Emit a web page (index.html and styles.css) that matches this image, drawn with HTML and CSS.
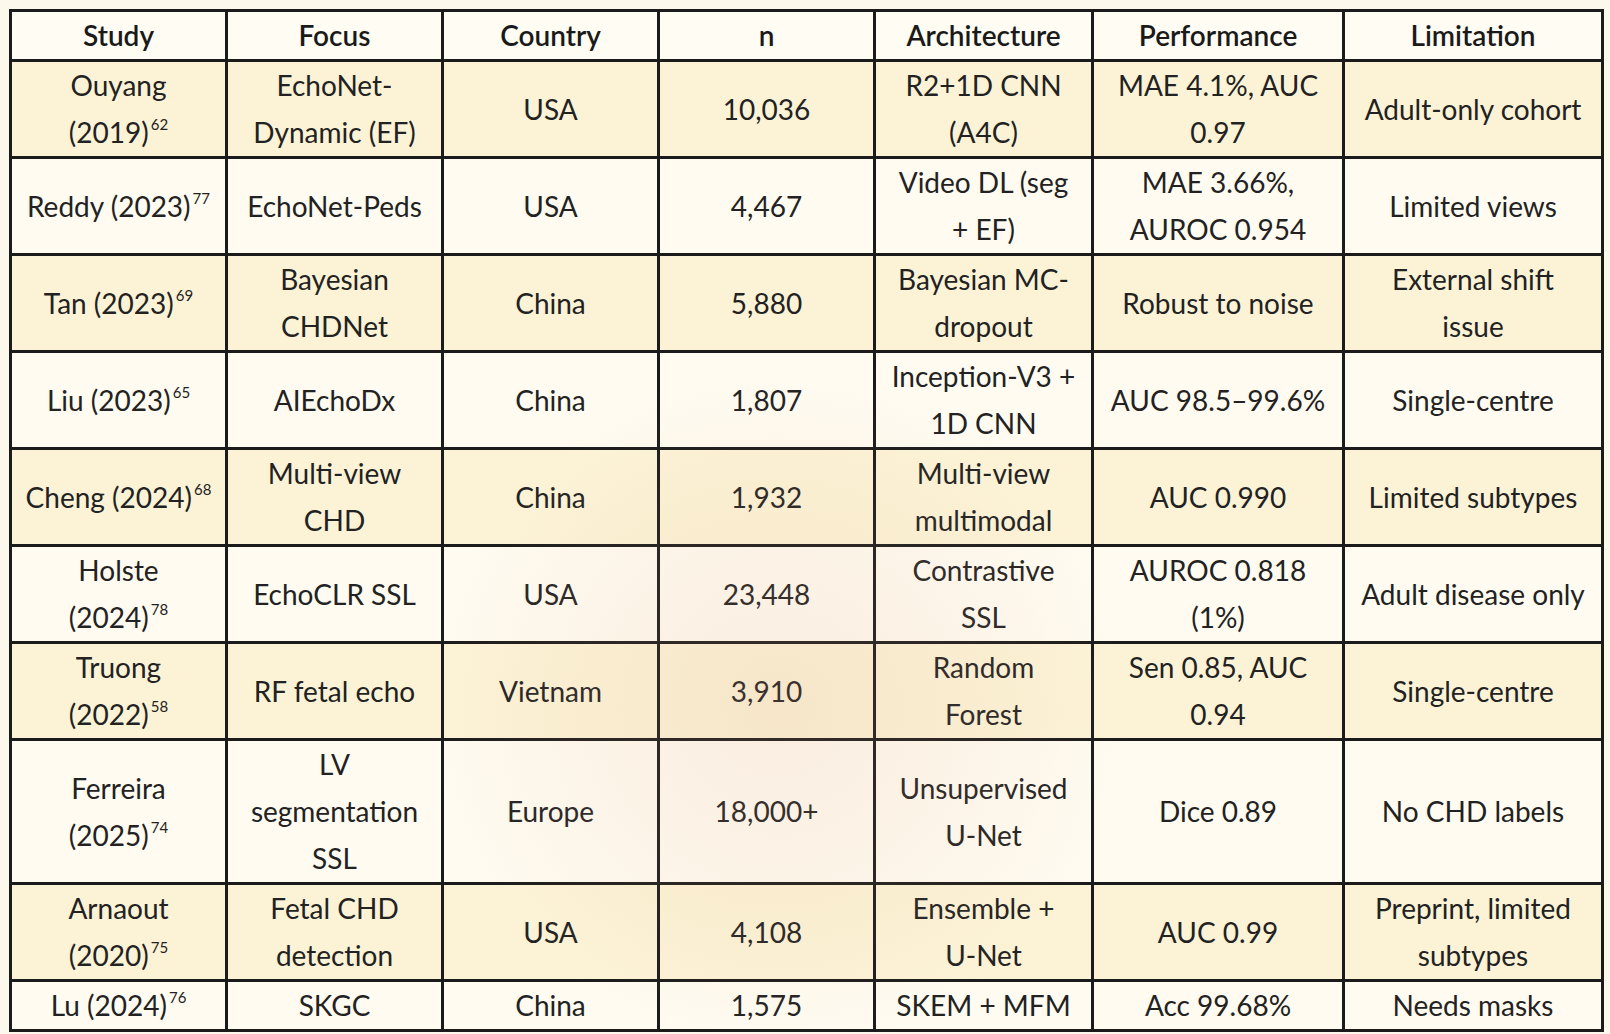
FILE: index.html
```html
<!DOCTYPE html>
<html lang="en">
<head>
<meta charset="utf-8">
<title>Deep learning echocardiography studies</title>
<link rel="stylesheet" href="styles.css">
</head>
<body>
<div class="page">
  <div class="wrap">
    <table class="studies">
      <colgroup>
        <col class="c-study"><col class="c-focus"><col class="c-country"><col class="c-n"><col class="c-arch"><col class="c-perf"><col class="c-lim">
      </colgroup>
      <thead>
        <tr class="head">
          <th>Study</th><th>Focus</th><th>Country</th><th>n</th><th>Architecture</th><th>Performance</th><th>Limitation</th>
        </tr>
      </thead>
      <tbody>
        <tr class="odd">
          <td>Ouyang<br>(2019)<sup>62</sup></td><td>EchoNet-<br>Dynamic (EF)</td><td>USA</td><td>10,036</td><td>R2+1D CNN<br>(A4C)</td><td>MAE 4.1%, AUC<br>0.97</td><td>Adult-only cohort</td>
        </tr>
        <tr class="even">
          <td>Reddy (2023)<sup>77</sup></td><td>EchoNet-Peds</td><td>USA</td><td>4,467</td><td>Video DL (seg<br>+ EF)</td><td>MAE 3.66%,<br>AUROC 0.954</td><td>Limited views</td>
        </tr>
        <tr class="odd">
          <td>Tan (2023)<sup>69</sup></td><td>Bayesian<br>CHDNet</td><td>China</td><td>5,880</td><td>Bayesian MC-<br>dropout</td><td>Robust to noise</td><td>External shift<br>issue</td>
        </tr>
        <tr class="even">
          <td>Liu (2023)<sup>65</sup></td><td>AIEchoDx</td><td>China</td><td>1,807</td><td>Inception-V3 +<br>1D CNN</td><td>AUC 98.5–99.6%</td><td>Single-centre</td>
        </tr>
        <tr class="odd">
          <td>Cheng (2024)<sup>68</sup></td><td>Multi-view<br>CHD</td><td>China</td><td>1,932</td><td>Multi-view<br>multimodal</td><td>AUC 0.990</td><td>Limited subtypes</td>
        </tr>
        <tr class="even">
          <td>Holste<br>(2024)<sup>78</sup></td><td>EchoCLR SSL</td><td>USA</td><td>23,448</td><td>Contrastive<br>SSL</td><td>AUROC 0.818<br>(1%)</td><td>Adult disease only</td>
        </tr>
        <tr class="odd">
          <td>Truong<br>(2022)<sup>58</sup></td><td>RF fetal echo</td><td>Vietnam</td><td>3,910</td><td>Random<br>Forest</td><td>Sen 0.85, AUC<br>0.94</td><td>Single-centre</td>
        </tr>
        <tr class="even">
          <td>Ferreira<br>(2025)<sup>74</sup></td><td>LV<br>segmentation<br>SSL</td><td>Europe</td><td>18,000+</td><td>Unsupervised<br>U-Net</td><td>Dice 0.89</td><td>No CHD labels</td>
        </tr>
        <tr class="odd">
          <td>Arnaout<br>(2020)<sup>75</sup></td><td>Fetal CHD<br>detection</td><td>USA</td><td>4,108</td><td>Ensemble +<br>U-Net</td><td>AUC 0.99</td><td>Preprint, limited<br>subtypes</td>
        </tr>
        <tr class="even">
          <td>Lu (2024)<sup>76</sup></td><td>SKGC</td><td>China</td><td>1,575</td><td>SKEM + MFM</td><td>Acc 99.68%</td><td>Needs masks</td>
        </tr>
      </tbody>
    </table>
    <div class="watermark" aria-hidden="true"></div>
  </div>
</div>
</body>
</html>
```

FILE: styles.css
```css
html, body {
  margin: 0;
  padding: 0;
  background: #fcf8ec;
}

body {
  font-family: Lato, "Liberation Sans", "DejaVu Sans", sans-serif;
  color: #1e1e1e;
}

.page {
  padding: 9px 0 0 9px;
}

.wrap {
  position: relative;
  width: 1595px;
}

.studies {
  border-collapse: collapse;
  table-layout: fixed;
  width: 1595px;
}

.c-study { width: 216px; }
.c-focus { width: 216px; }
.c-country { width: 216px; }
.c-n { width: 216px; }
.c-arch { width: 218px; }
.c-perf { width: 251px; }
.c-lim { width: 259px; }

.studies th,
.studies td {
  border: 3px solid #1b1b1b;
  padding: 0;
  text-align: center;
  vertical-align: middle;
  font-size: 28px;
  line-height: 47px;
  white-space: nowrap;
}

.studies th {
  font-weight: 600;
  background: #fffcf3;
  color: #1a1a1a;
}

.studies td {
  font-weight: 400;
  color: #222;
}

.odd td {
  background: #fcf3d6;
}

.even td {
  background: #fffbf0;
}

.studies sup {
  font-size: 15px;
  line-height: 0;
  vertical-align: 13px;
  margin-left: 2px;
}

.watermark {
  position: absolute;
  left: 420px;
  top: 360px;
  width: 700px;
  height: 680px;
  border-radius: 50%;
  pointer-events: none;
  background: radial-gradient(closest-side, rgba(214, 150, 125, 0.14), rgba(224, 170, 145, 0.08) 60%, rgba(230, 185, 160, 0) 100%);
}
```
